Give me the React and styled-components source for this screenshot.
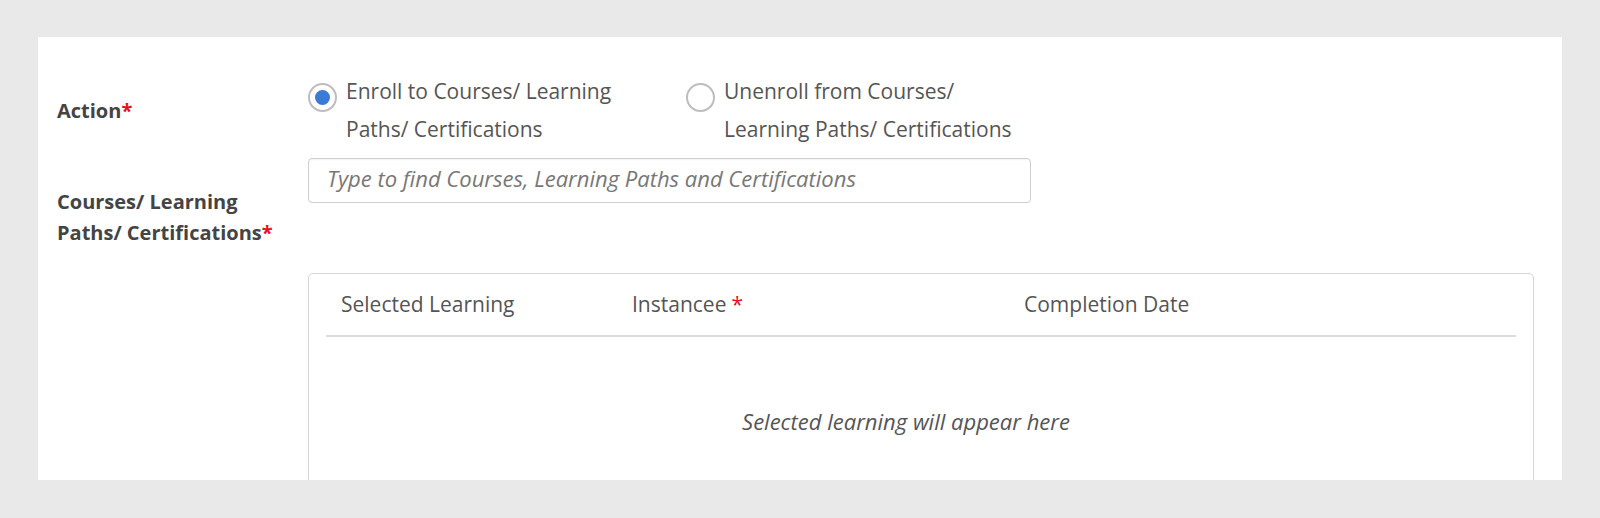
import React, { useState } from 'react';
import styled, { createGlobalStyle } from 'styled-components';

const GlobalStyle = createGlobalStyle`
  html, body {
    margin: 0;
    padding: 0;
    background: #e9e9e9;
    font-family: "Open Sans", Lato, sans-serif;
  }
`;

const Page = styled.div`
  padding: 37px 38px 38px 38px;
  text-align: left;
`;

const Panel = styled.div`
  background: #fff;
  height: 443px;
  overflow: hidden;
  padding: 35px 28px 0 19px;
  box-sizing: border-box;
`;

const FormRow = styled.div`
  display: grid;
  grid-template-columns: 251px 1fr;
  align-items: ${(p) => p.$align || 'start'};
  margin-bottom: ${(p) => p.$gap || 0}px;
`;

const Label = styled.div`
  font-size: 20px;
  font-weight: 700;
  color: #444;
  line-height: 31px;
  padding-top: ${(p) => p.$offset || 0}px;
`;

const Star = styled.span`
  color: #e8101a;
  margin-left: ${(p) => p.$space || 0}px;
`;

const RadioGroup = styled.div`
  display: flex;
`;

const RadioOption = styled.label`
  display: flex;
  align-items: flex-start;
  width: 378px;
  cursor: pointer;
`;

const RadioCircle = styled.span`
  flex: none;
  width: 29px;
  height: 29px;
  box-sizing: border-box;
  border-radius: 50%;
  border: 2px solid #bdbdbd;
  margin-top: 11px;
  display: flex;
  align-items: center;
  justify-content: center;

  &::after {
    content: '';
    width: 15px;
    height: 15px;
    border-radius: 50%;
    background: ${(p) => (p.$checked ? '#3a7bd5' : 'transparent')};
  }
`;

const RadioText = styled.span`
  margin-left: 9px;
  max-width: 300px;
  font-size: 21px;
  line-height: 38px;
  color: #555;
`;

const Field = styled.div`
  display: flex;
  flex-direction: column;
`;

const SearchInput = styled.input`
  width: 723px;
  height: 45px;
  box-sizing: border-box;
  border: 1px solid #cfcfcf;
  border-radius: 4px;
  box-shadow: inset 0 1px 2px rgba(0, 0, 0, 0.06);
  padding: 0 18px 5px;
  font-family: inherit;
  font-size: 22px;
  color: #555;
  outline: none;

  &::placeholder {
    font-style: italic;
    color: #777;
  }
`;

const TableBox = styled.div`
  margin-top: 70px;
  border: 1px solid #d6d6d6;
  border-radius: 5px;
  padding: 0 17px;
  height: 260px;
`;

const TableHead = styled.div`
  display: grid;
  grid-template-columns: 291px 392px 1fr;
  padding: 17px 15px 18px;
  border-bottom: 2px solid #dcdcdc;
`;

const HeadCell = styled.div`
  font-size: 21px;
  line-height: 26px;
  color: #555;
`;

const Empty = styled.div`
  padding: 70px 30px 0 0;
  text-align: center;
  font-size: 22px;
  line-height: 28px;
  font-style: italic;
  color: #555;
`;

const options = [
  { id: 'enroll', text: 'Enroll to Courses/ Learning Paths/ Certifications' },
  { id: 'unenroll', text: 'Unenroll from Courses/ Learning Paths/ Certifications' },
];

export default function App() {
  const [action, setAction] = useState('enroll');
  const [query, setQuery] = useState('');

  return (
    <>
      <GlobalStyle />
      <Page>
        <Panel>
          <FormRow $align="center" $gap={10}>
            <Label>
              Action<Star>*</Star>
            </Label>
            <RadioGroup>
              {options.map((o) => (
                <RadioOption key={o.id} onClick={() => setAction(o.id)}>
                  <RadioCircle $checked={action === o.id} />
                  <RadioText>{o.text}</RadioText>
                </RadioOption>
              ))}
            </RadioGroup>
          </FormRow>
          <FormRow>
            <Label $offset={28}>
              Courses/ Learning
              <br />
              Paths/ Certifications<Star>*</Star>
            </Label>
            <Field>
              <SearchInput
                value={query}
                onChange={(e) => setQuery(e.target.value)}
                placeholder="Type to find Courses, Learning Paths and Certifications"
              />
              <TableBox>
                <TableHead>
                  <HeadCell>Selected Learning</HeadCell>
                  <HeadCell>
                    Instancee<Star $space={5}>*</Star>
                  </HeadCell>
                  <HeadCell>Completion Date</HeadCell>
                </TableHead>
                <Empty>Selected learning will appear here</Empty>
              </TableBox>
            </Field>
          </FormRow>
        </Panel>
      </Page>
    </>
  );
}
